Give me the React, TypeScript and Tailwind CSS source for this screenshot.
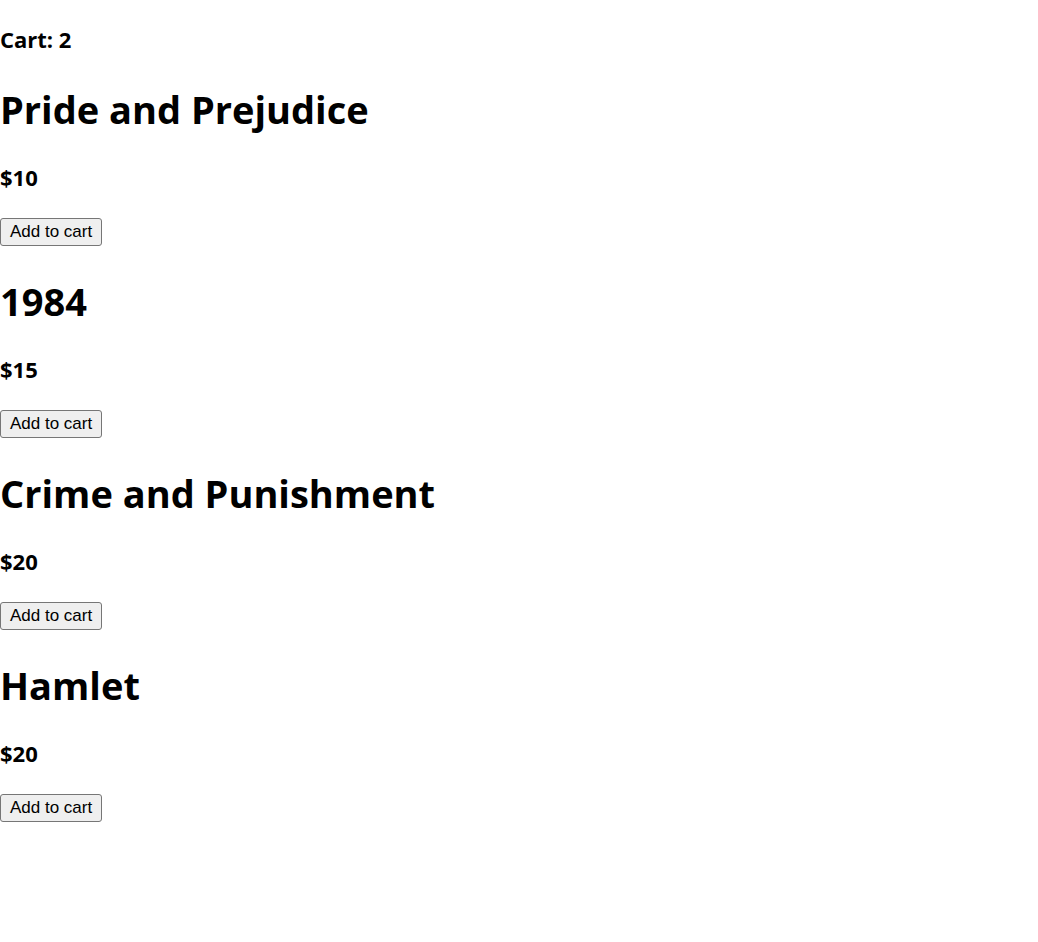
type Book = { id: number; title: string; price: number };

const books: Book[] = [
  { id: 1, title: "Pride and Prejudice", price: 10 },
  { id: 2, title: "1984", price: 15 },
  { id: 3, title: "Crime and Punishment", price: 20 },
  { id: 4, title: "Hamlet", price: 20 },
];

function Product({ book }: { book: Book }) {
  return (
    <article className="flex flex-col items-start">
      <h2 className="text-[38px] leading-[54px] font-bold">{book.title}</h2>
      <p className="mt-[26px] text-[22px] leading-[30px] font-bold">${book.price}</p>
      <button
        type="button"
        aria-label={`Add to cart: ${book.title}`}
        className="mt-[26px] h-7 rounded-[3px] border border-[#767676] bg-[#efefef] px-[9px] font-['Liberation_Sans',Arial,sans-serif] text-[17px] leading-5"
      >
        Add to cart
      </button>
    </article>
  );
}

export default function App() {
  return (
    <main className="bg-white pt-6 font-['Open_Sans','Noto_Sans',sans-serif] text-black">
      <h1 className="text-[22px] leading-[30px] font-bold">Cart: 2</h1>
      <div className="mt-7 flex flex-col gap-7">
        {books.map((book) => (
          <Product key={book.id} book={book} />
        ))}
      </div>
    </main>
  );
}
